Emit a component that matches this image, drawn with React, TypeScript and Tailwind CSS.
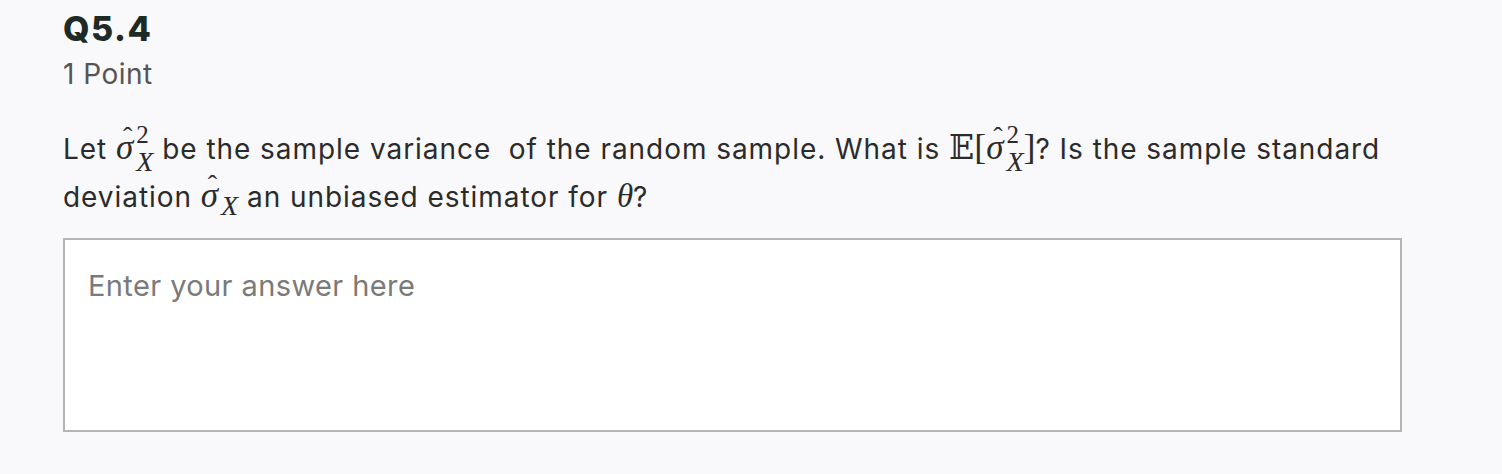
import React from 'react';

const serif = "font-['Liberation_Serif',serif]";

// σ with a hat accent
const SigmaHat = () => (
  <span className={`relative inline-block ${serif} italic text-[35px] leading-none tracking-normal`}>
    σ
    <span className="absolute left-[7px] top-[-7px] not-italic text-[28px]">ˆ</span>
  </span>
);

// stacked superscript over subscript
const SupSub = ({ sup, sub }: { sup: string; sub: string }) => (
  <span className={`inline-block align-[-12px] mt-[-30px] mb-[-10px] ${serif} ml-[3px] tracking-normal`}>
    <span className="block text-[25px] leading-[27px]">{sup}</span>
    <span className="block text-[28px] italic leading-[27px]">{sub}</span>
  </span>
);

export default function App() {
  return (
    <div className="min-h-[474px] w-full bg-[#f9f9fb] pl-[63px] pt-[6px] font-['Inter',sans-serif]">
      <div className="w-[1338px]">
        <h2 className="text-[34px] font-extrabold text-[#1e2a26] leading-[46px] tracking-[1.5px]">Q5.4</h2>
        <p className="text-[28px] text-[#555555] leading-[36px] mt-[4px] tracking-[0.5px]">1 Point</p>
        <p className="text-[28px] text-[#2b2b2b] leading-[48px] mt-[33px] tracking-[0.95px]">
          Let{' '}
          <span className="inline-block">
            <SigmaHat />
            <SupSub sup="2" sub="X" />
          </span>{' '}
          be the sample variance&nbsp; of the random sample. What is{' '}
          <span className="inline-block tracking-normal">
            <span className="font-['DejaVu_Serif','DejaVu_Sans',serif] text-[33px] leading-none">𝔼</span>
            <span className={`${serif} text-[36px] leading-none`}>[</span>
            <SigmaHat />
            <SupSub sup="2" sub="X" />
            <span className={`${serif} text-[36px] leading-none`}>]</span>
          </span>
          ? Is the sample standard deviation{' '}
          <span className="inline-block">
            <SigmaHat />
            <span className={`${serif} italic text-[28px] leading-none align-[-8px] ml-[3px] tracking-normal`}>X</span>
          </span>{' '}
          an unbiased estimator for <span className={`${serif} italic text-[33px] leading-none tracking-normal`}>θ</span>?
        </p>
        <textarea
          placeholder="Enter your answer here"
          className="mt-[17px] block w-[1339px] h-[194px] bg-white border-2 border-[#b5b5b5] px-[23px] py-[28px] text-[29px] leading-[36px] tracking-[0.4px] text-[#333] placeholder:text-[#7a7a7a] resize-none outline-none font-['Inter',sans-serif]"
        />
      </div>
    </div>
  );
}
